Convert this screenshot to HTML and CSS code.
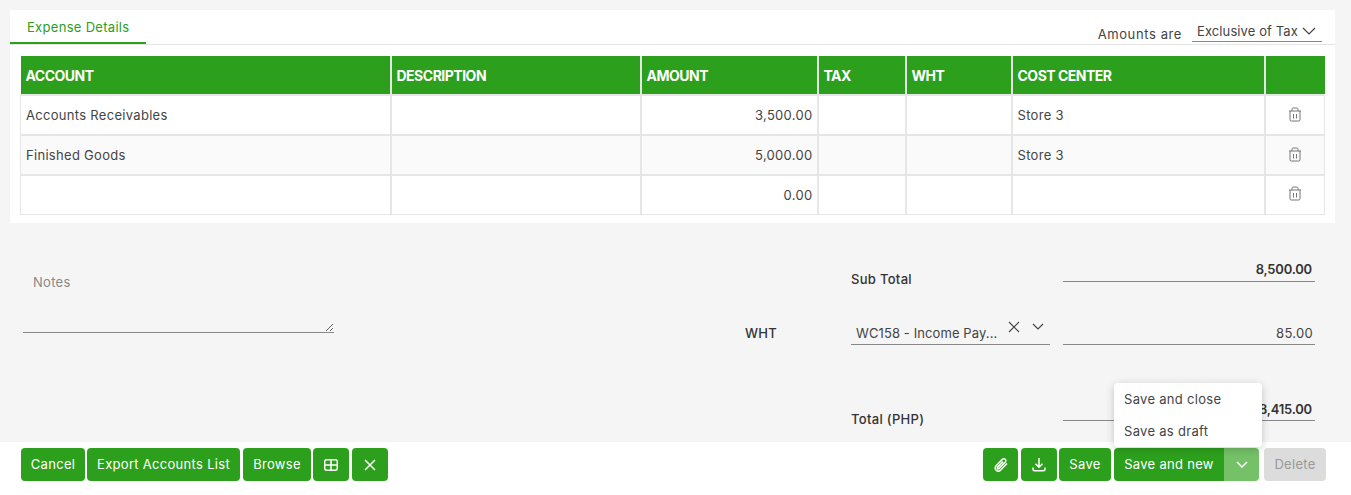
FILE: index.html
```html
<!DOCTYPE html>
<html lang="en">
<head>
    <meta charset="UTF-8">
    <title>Expense Details</title>
    <link rel="stylesheet" href="styles.css">
</head>
<body>

<main class="content">
    <section class="card">
        <div class="tabs">
            <a class="tab">Expense Details</a>
            <div class="amounts">
                <span class="amounts-label">Amounts are</span>
                <div class="amounts-select">
                    <span class="amounts-text">Exclusive of Tax</span>
                    <svg class="chevron" width="14" height="8" viewBox="0 0 14 8"><path d="M1 1l6 6 6-6"/></svg>
                </div>
            </div>
        </div>
        <table class="grid">
            <colgroup>
                <col class="col-account"><col class="col-desc"><col class="col-amount"><col class="col-tax"><col class="col-wht"><col class="col-center"><col>
            </colgroup>
            <thead>
                <tr>
                    <th>ACCOUNT</th><th>DESCRIPTION</th><th>AMOUNT</th><th>TAX</th><th>WHT</th><th>COST CENTER</th><th></th>
                </tr>
            </thead>
            <tbody>
                <tr>
                    <td>Accounts Receivables</td><td></td><td class="num">3,500.00</td><td></td><td></td><td>Store 3</td>
                    <td class="action"><svg class="trash" width="14" height="15" viewBox="0 0 14 15"><path d="M1 4h12M4 4V2.200C4 1.500 4.500 1 5.200 1h3.600c.7 0 1.200.5 1.200 1.200V4M2 4v8.800c0 .7.5 1.200 1.200 1.200h7.600c.7 0 1.200-.5 1.200-1.200V4M5.500 7v4.500M8.500 7v4.500"/></svg></td>
                </tr>
                <tr class="alt">
                    <td>Finished Goods</td><td></td><td class="num">5,000.00</td><td></td><td></td><td>Store 3</td>
                    <td class="action"><svg class="trash" width="14" height="15" viewBox="0 0 14 15"><path d="M1 4h12M4 4V2.200C4 1.500 4.500 1 5.200 1h3.600c.7 0 1.200.5 1.200 1.200V4M2 4v8.800c0 .7.5 1.200 1.200 1.200h7.600c.7 0 1.200-.5 1.200-1.200V4M5.500 7v4.500M8.500 7v4.500"/></svg></td>
                </tr>
                <tr>
                    <td></td><td></td><td class="num">0.00</td><td></td><td></td><td></td>
                    <td class="action"><svg class="trash" width="14" height="15" viewBox="0 0 14 15"><path d="M1 4h12M4 4V2.200C4 1.500 4.500 1 5.200 1h3.600c.7 0 1.200.5 1.200 1.200V4M2 4v8.800c0 .7.5 1.200 1.200 1.200h7.600c.7 0 1.200-.5 1.200-1.200V4M5.500 7v4.500M8.500 7v4.500"/></svg></td>
                </tr>
            </tbody>
        </table>
    </section>

    <section class="lower">
        <textarea class="notes" placeholder="Notes"></textarea>
        <div class="summary">
            <div></div>
            <div class="sum-label first">Sub Total</div>
            <div class="sum-value bold">8,500.00</div>

            <div class="sum-label wht">WHT</div>
            <div class="wht-select">
                <span class="wht-text">WC158 - Income Pay...</span>
                <svg class="clear" width="12" height="12" viewBox="0 0 12 12"><path d="M1 1l10 10M11 1L1 11"/></svg>
                <svg class="chevron" width="12" height="7" viewBox="0 0 12 7"><path d="M1 1l5 5 5-5"/></svg>
            </div>
            <div class="sum-value plain">85.00</div>

            <div></div>
            <div class="sum-label total">Total (PHP)</div>
            <div class="sum-value bold last">8,415.00</div>
        </div>
    </section>
</main>

<footer class="actions">
    <div class="btn-group">
        <button class="btn cancel">Cancel</button>
        <button class="btn export">Export Accounts List</button>
        <button class="btn browse">Browse</button>
        <button class="btn icon-btn">
            <svg class="icon" width="14" height="12" viewBox="0 0 14 12"><rect x=".7" y=".7" width="12.600" height="10.600" rx="2"/><path d="M7 .7v10.600M.7 6h12.600"/></svg>
        </button>
        <button class="btn icon-btn close">
            <svg class="icon" width="12" height="12" viewBox="0 0 12 12"><path d="M1 1l10 10M11 1L1 11"/></svg>
        </button>
    </div>
    <div class="btn-group">
        <button class="btn icon-btn attach">
            <svg class="icon" width="16" height="16" viewBox="0 0 16 16"><path d="M14 6.500l-6.300 6.600c-1.300 1.300-3.300 1.400-4.600.2-1.300-1.200-1.300-3.200 0-4.600l6.200-6.300c.9-.9 2.200-.9 3-.1.800.8.800 2.100-.1 3L6.100 11.500c-.5.500-1.100.5-1.500.1-.4-.4-.4-1 .1-1.500l5.400-5.500"/></svg>
        </button>
        <button class="btn icon-btn">
            <svg class="icon" width="14" height="15" viewBox="0 0 14 15"><path d="M7 1v9M3.500 6.800L7 10.200l3.500-3.400M1 10.500v1.800c0 .9.600 1.500 1.500 1.500h9c.9 0 1.500-.6 1.500-1.500v-1.800"/></svg>
        </button>
        <button class="btn save">Save</button>
        <div class="split">
            <button class="btn split-main">Save and new</button>
            <button class="btn split-toggle">
                <svg class="icon" width="12" height="7" viewBox="0 0 12 7"><path d="M1 1l5 5 5-5"/></svg>
            </button>
            <ul class="menu">
                <li>Save and close</li>
                <li>Save as draft</li>
            </ul>
        </div>
        <button class="btn delete" disabled>Delete</button>
    </div>
</footer>

</body>
</html>
```

FILE: styles.css
```css
* {
    box-sizing: border-box;
}
html, body {
    height: 100%;
}
body {
    margin: 0;
    display: flex;
    flex-direction: column;
    overflow: hidden;
    background-color: #f5f5f5;
    font-family: "Inter", "Open Sans", sans-serif;
    font-size: 13px;
    letter-spacing: 0.3px;
    color: #444;
}
.content {
    height: 442px;
    overflow: hidden;
    padding-top: 10px;
}

/* top card */
.card {
    margin: 0 16px 0 10px;
    height: 213px;
    padding-bottom: 8px;
    background-color: #fff;
}
.tabs {
    display: flex;
    justify-content: space-between;
    height: 35px;
    border-bottom: 1px solid #e4e4e4;
}
.tab {
    width: 136px;
    height: 34px;
    padding: 9px 0 0 17px;
    line-height: 16px;
    color: #2ca01c;
    border-bottom: 2px solid #2ca01c;
}
.amounts {
    display: flex;
    align-items: flex-end;
    padding-right: 13px;
}
.amounts-label {
    margin-right: 10px;
    margin-bottom: 2px;
    line-height: 16px;
    letter-spacing: 0.6px;
}
.amounts-select {
    display: flex;
    align-items: center;
    justify-content: space-between;
    width: 130px;
    height: 22px;
    margin-bottom: 2px;
    padding: 0 6px 0 5px;
    border-bottom: 1px solid #888;
    white-space: nowrap;
}
.amounts-text {
    letter-spacing: 0.1px;
}
.chevron {
    fill: none;
    stroke: #444;
    stroke-width: 1.2;
}

/* table */
.grid {
    width: 1305px;
    margin: 11px 0 0 10px;
    border-collapse: collapse;
    table-layout: fixed;
}
.col-account { width: 370px; }
.col-desc { width: 250px; }
.col-amount { width: 177px; }
.col-tax { width: 88px; }
.col-wht { width: 106px; }
.col-center { width: 253px; }
.grid th {
    height: 39px;
    padding: 0 5px;
    background-color: #2ca01c;
    border-right: 2px solid #e6e6e6;
    border-bottom: 2px solid #e6e6e6;
    color: #fff;
    font-size: 14px;
    font-weight: 700;
    letter-spacing: -0.5px;
    text-align: left;
}
.grid th:last-child {
    border-right: none;
}
.grid td {
    height: 40px;
    padding: 0 5px;
    border: 2px solid #e6e6e6;
}
.grid tr:last-child td {
    height: 39px;
    border-bottom-width: 1px;
}
.grid td:first-child {
    border-left-width: 1px;
}
.grid td:last-child {
    border-right-width: 1px;
}
.grid .alt td {
    background-color: #fafafa;
}
.grid .num {
    padding-right: 4px;
    text-align: right;
}
.grid .action {
    text-align: center;
    padding: 0;
}
.trash {
    display: block;
    margin: -2px auto 0;
    fill: none;
    stroke: #777;
    stroke-width: 1;
}

/* notes and totals */
.lower {
    display: flex;
    justify-content: space-between;
    padding: 27px 36px 0 23px;
}
.notes {
    width: 311px;
    height: 63px;
    margin-top: 20px;
    padding: 4px 10px;
    background: transparent;
    border: none;
    border-bottom: 1px solid #888;
    outline: none;
    font-family: inherit;
    font-size: 13px;
    letter-spacing: inherit;
    line-height: 16px;
}
.notes::placeholder {
    color: #888;
}
.summary {
    display: grid;
    grid-template-columns: 106px 199px 265px;
    grid-template-rows: 40px 63px 76px;
}
.summary > * {
    align-self: end;
}
.sum-label {
    line-height: 16px;
    font-weight: 500;
    color: #333;
}
.sum-label.first {
    margin-bottom: 3px;
}
.sum-label.wht {
    margin-bottom: 12px;
}
.sum-label.total {
    margin-bottom: 2px;
}
.sum-value {
    grid-column: 3;
    width: 252px;
    margin-left: 13px;
    margin-bottom: 8px;
    padding: 0 2px 4px 0;
    border-bottom: 1px solid #888;
    line-height: 16px;
    text-align: right;
}
.sum-value.bold {
    padding-right: 3px;
    font-weight: 600;
    letter-spacing: -0.2px;
    color: #333;
}
.sum-value.plain,
.sum-value.last {
    padding-bottom: 3px;
}
.wht-select {
    display: flex;
    align-items: flex-start;
    height: 25px;
    margin-bottom: 8px;
    padding: 0 5px;
    border-bottom: 1px solid #888;
}
.wht-text {
    flex: 1;
    padding-top: 5px;
    line-height: 16px;
    letter-spacing: 0.1px;
}
.clear {
    margin: 1px 12px 0 0;
    fill: none;
    stroke: #444;
    stroke-width: 1.1;
}
.wht-select .chevron {
    margin: 3px 1px 0 0;
}

/* footer */
.actions {
    flex: 1;
    display: flex;
    justify-content: space-between;
    padding: 6px 25px 0 21px;
    background-color: #fff;
}
.btn-group {
    display: flex;
    align-items: flex-start;
    gap: 2px;
}
.btn {
    height: 33px;
    padding: 0 0 1px;
    background-color: #2ca01c;
    border: none;
    border-radius: 4px;
    color: #fff;
    font-family: inherit;
    font-size: 13px;
    letter-spacing: inherit;
    cursor: pointer;
}
.cancel { width: 64px; }
.export { width: 153px; }
.browse { width: 68px; margin-left: 1px; }
.save { width: 52px; }
.icon-btn {
    display: flex;
    align-items: center;
    justify-content: center;
    width: 36px;
    padding: 0;
}
.close { margin-left: 1px; }
.attach { width: 35px; margin-right: 1px; }
.icon {
    fill: none;
    stroke: #fff;
    stroke-width: 1.5;
}
.split {
    position: relative;
    display: flex;
    margin-left: 1px;
    margin-right: 3px;
}
.split-main {
    width: 110px;
    border-radius: 4px 0 0 4px;
}
.split-toggle {
    display: flex;
    align-items: center;
    justify-content: center;
    width: 35px;
    background-color: #74c168;
    border-radius: 0 4px 4px 0;
}
.delete {
    width: 62px;
    background-color: #dcdcdc;
    color: #999;
    cursor: default;
}
.menu {
    position: absolute;
    left: 0;
    bottom: 34px;
    width: 148px;
    margin: 0;
    padding: 0;
    list-style: none;
    background-color: #fff;
    border-radius: 4px;
    box-shadow: 0 2px 8px rgba(0, 0, 0, 0.2);
}
.menu li {
    height: 32px;
    padding: 0 10px;
    line-height: 32px;
}
```
